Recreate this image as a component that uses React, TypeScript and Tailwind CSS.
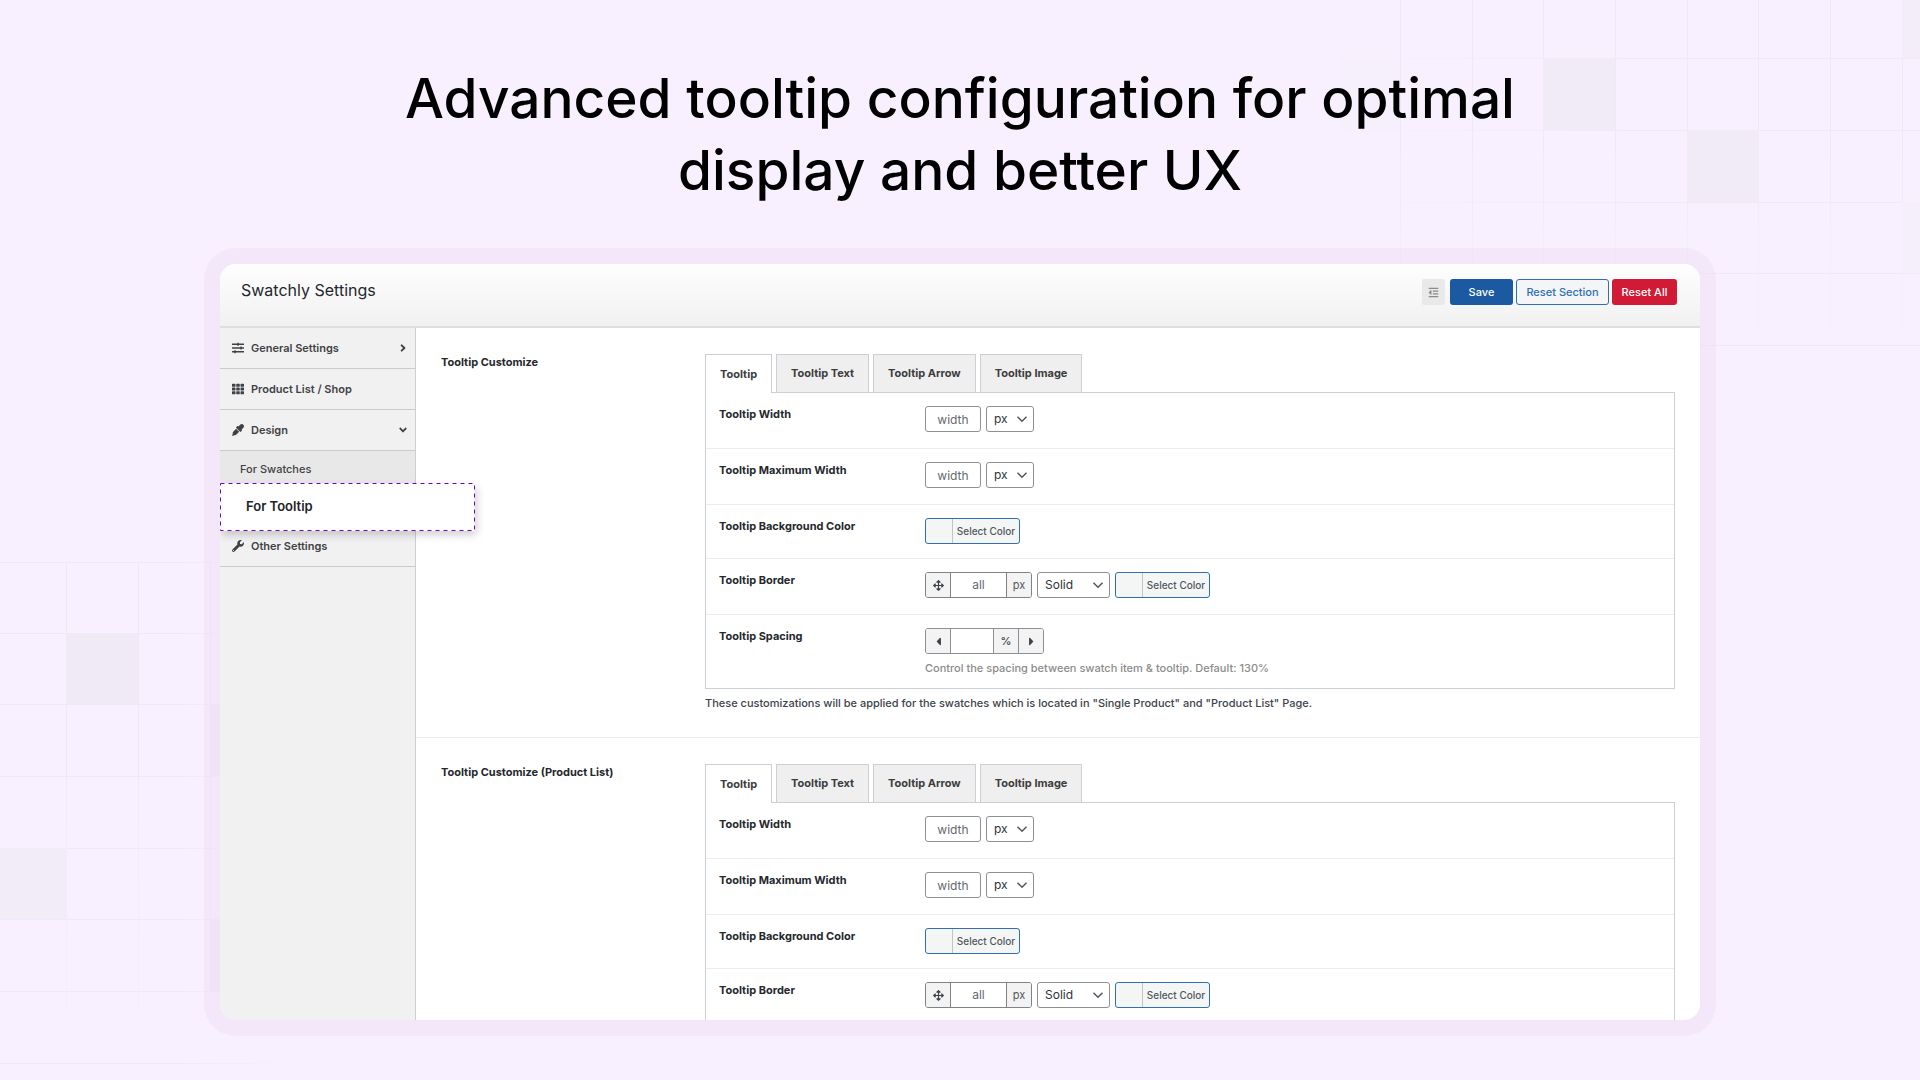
import type { ReactNode } from 'react';
import {
    FaAngleDown,
    FaAngleRight,
    FaArrowsAlt,
    FaCaretLeft,
    FaCaretRight,
    FaEyeDropper,
    FaOutdent,
    FaSlidersH,
    FaTh,
    FaWrench,
} from 'react-icons/fa';

const tabs = ['Tooltip', 'Tooltip Text', 'Tooltip Arrow', 'Tooltip Image'];

const rightColumns = [1400, 1472, 1543, 1615, 1687, 1758, 1830, 1902];
const rightRows = [58, 130, 202, 273, 345];
const leftColumns = [66, 138, 210];
const leftRows = [562, 633, 704, 776, 848, 919, 991, 1063];

function Backdrop() {
    return (
        <svg
            className="absolute inset-0 h-full w-full"
            viewBox="0 0 1920 1080"
            preserveAspectRatio="xMidYMid slice"
            aria-hidden="true"
        >
            <defs>
                <linearGradient id="fadeDown" x1="0" y1="0" x2="0" y2="1">
                    <stop offset="0.4" stopColor="#ece7f4" />
                    <stop offset="1" stopColor="#ece7f4" stopOpacity="0" />
                </linearGradient>
                <linearGradient id="fadeLeft" x1="1" y1="0" x2="0" y2="0">
                    <stop offset="0.5" stopColor="#ece7f4" />
                    <stop offset="1" stopColor="#ece7f4" stopOpacity="0" />
                </linearGradient>
                <linearGradient id="fadeRight" x1="0" y1="0" x2="1" y2="0">
                    <stop offset="0.6" stopColor="#ece7f4" />
                    <stop offset="1" stopColor="#ece7f4" stopOpacity="0" />
                </linearGradient>
            </defs>

            {/* Top right grid */}
            <g opacity="0.7">
                {rightColumns.map((x) => (
                    <rect key={x} x={x} y="0" width="1" height="367" fill="url(#fadeDown)" />
                ))}
                {rightRows.map((y) => (
                    <rect key={y} x="1339" y={y} width="581" height="1" fill="url(#fadeLeft)" />
                ))}
            </g>
            <rect x="1339" y="58" width="61" height="72" fill="#f6effc" />
            <rect x="1543" y="58" width="72" height="72" fill="#f1eaf7" />
            <rect x="1687" y="130" width="72" height="72" fill="#f1eaf7" />
            <rect x="1902" y="0" width="18" height="58" fill="#f3ecf9" />
            <rect x="1902" y="202" width="18" height="71" fill="#f5eefb" />

            {/* Bottom left grid */}
            <g opacity="0.7">
                {leftColumns.map((x) => (
                    <rect key={x} x={x} y="562" width="1" height="518" fill="url(#fadeDown)" />
                ))}
                {leftRows.map((y) => (
                    <rect key={y} x="0" y={y} width="300" height="1" fill="url(#fadeRight)" />
                ))}
            </g>
            <rect x="66" y="633" width="72" height="71" fill="#f0eaf7" />
            <rect x="0" y="848" width="67" height="71" fill="#f2ebf8" />
            <rect x="210" y="704" width="72" height="72" fill="#f0eaf7" />
            <rect x="210" y="919" width="72" height="72" fill="#f0eaf7" />
        </svg>
    );
}

function Chevron() {
    return (
        <svg
            className="pointer-events-none absolute top-1/2 right-1.5 h-3 w-3 -translate-y-1/2 text-[#50575e]"
            viewBox="0 0 12 12"
            fill="none"
            stroke="currentColor"
            strokeWidth="1.5"
            aria-hidden="true"
        >
            <path d="M1.5 3.8 6 8.3l4.5-4.5" />
        </svg>
    );
}

function Select({ label, value, className }: { label: string; value: string; className: string }) {
    return (
        <div className={`relative ${className}`}>
            <select
                aria-label={label}
                defaultValue={value}
                className="block h-[26px] w-full appearance-none rounded-[3px] border border-[#8c8f94] bg-white pl-[7px] text-xs text-[#2c3338]"
            >
                <option>{value}</option>
            </select>
            <Chevron />
        </div>
    );
}

function ColorButton() {
    return (
        <button
            type="button"
            className="flex h-[26px] w-[95px] items-stretch rounded-[3px] border border-[#2f6fb5] bg-[#f4f6f6] text-[10px] font-medium text-[#50575e]"
        >
            <span className="w-[27px] border-r border-[#c3c4c7]" />
            <span className="flex flex-1 items-center justify-center">Select Color</span>
        </button>
    );
}

function Row({ label, children, last }: { label: string; children: ReactNode; last?: boolean }) {
    return (
        <div className={`flex pt-[13px] pl-[13px] ${last ? '' : 'border-b border-[#ececec]'}`}>
            <h4 className="w-[206px] text-[11px] leading-4 font-bold text-[#23282d]">{label}</h4>
            <div className="flex-1">{children}</div>
        </div>
    );
}

function WidthFields({ name }: { name: string }) {
    return (
        <div className="flex gap-[5px] pb-4">
            <input
                type="text"
                aria-label={name}
                placeholder="width"
                className="h-[26px] w-14 rounded-[3px] border border-[#8c8f94] text-center text-xs placeholder:text-[#646970]"
            />
            <Select label={`${name} unit`} value="px" className="w-12" />
        </div>
    );
}

function SpacingField() {
    return (
        <>
            <div className="flex h-[26px] w-fit overflow-hidden rounded-[3px] border border-[#8c8f94] text-[#3c434a]">
                <button type="button" aria-label="Decrease" className="flex w-6 items-center justify-center bg-[#f3f3f3]">
                    <FaCaretLeft size={13} />
                </button>
                <input
                    type="text"
                    aria-label="Tooltip Spacing"
                    className="w-11 border-x border-[#8c8f94] text-center text-xs"
                />
                <span className="flex w-6 items-center justify-center bg-[#f3f3f3] text-[11px] font-medium">%</span>
                <button
                    type="button"
                    aria-label="Increase"
                    className="flex w-[25px] items-center justify-center border-l border-[#8c8f94] bg-[#f3f3f3]"
                >
                    <FaCaretRight size={13} />
                </button>
            </div>
            <p className="pt-1.5 pb-3 text-[11px] leading-4 font-medium text-[#8c8c8c]">
                Control the spacing between swatch item &amp; tooltip. Default: 130%
            </p>
        </>
    );
}

function Customize({ title, spacing, note }: { title: string; spacing?: boolean; note?: string }) {
    return (
        <section className="flex border-b border-[#ececec] px-[25px] pt-[26px] pb-[26px]">
            <h3 className="w-[264px] shrink-0 text-[11px] leading-4 font-bold text-[#23282d]">{title}</h3>
            <div className="min-w-0 flex-1">
                <div role="tablist" className="flex gap-1">
                    {tabs.map((tab, i) => (
                        <button
                            key={tab}
                            type="button"
                            role="tab"
                            aria-selected={i === 0}
                            className={`border border-b-0 border-[#ccd0d4] px-3.5 text-[11px] font-bold text-[#3c3c3c] ${
                                i === 0 ? 'relative -mb-px h-[39px] bg-white' : 'h-[38px] bg-[#efefef]'
                            }`}
                        >
                            {tab}
                        </button>
                    ))}
                </div>
                <div className="border border-[#ccd0d4]">
                    <Row label="Tooltip Width">
                        <WidthFields name="Tooltip Width" />
                    </Row>
                    <Row label="Tooltip Maximum Width">
                        <WidthFields name="Tooltip Maximum Width" />
                    </Row>
                    <Row label="Tooltip Background Color">
                        <div className="pb-3.5">
                            <ColorButton />
                        </div>
                    </Row>
                    <Row label="Tooltip Border" last={!spacing}>
                        <div className="flex gap-[5px] pb-4">
                            <div className="flex h-[26px] overflow-hidden rounded-[3px] border border-[#7e8388] text-[#50575e]">
                                <span className="flex w-6 items-center justify-center bg-[#f3f3f3] text-[#3c434a]">
                                    <FaArrowsAlt size={11} />
                                </span>
                                <input
                                    type="text"
                                    aria-label="Border width"
                                    placeholder="all"
                                    className="w-[57px] border-x border-[#7e8388] text-center text-xs placeholder:text-[#646970]"
                                />
                                <span className="flex w-6 items-center justify-center bg-[#f3f3f3] text-[11px]">px</span>
                            </div>
                            <Select label="Border style" value="Solid" className="w-[73px]" />
                            <ColorButton />
                        </div>
                    </Row>
                    {spacing && (
                        <Row label="Tooltip Spacing" last>
                            <SpacingField />
                        </Row>
                    )}
                </div>
                {note && <p className="mt-1.5 text-[11px] leading-4 font-medium text-[#3c434a]">{note}</p>}
            </div>
        </section>
    );
}

function NavItem({ icon, label, arrow }: { icon: ReactNode; label: string; arrow?: ReactNode }) {
    return (
        <a
            href="#"
            className="flex h-[41px] items-center border-b border-[#c9cccf] pr-1.5 pl-3 text-[11px] font-semibold text-[#3f4245]"
        >
            {icon}
            <span className="ml-[7px] flex-1">{label}</span>
            {arrow}
        </a>
    );
}

export default function App() {
    return (
        <main className="relative flex h-screen flex-col overflow-hidden bg-[#f8f0fe] px-[204px] pt-[62px] pb-11 font-['Inter',sans-serif]">
            <Backdrop />

            <h1 className="relative mb-[42px] text-center text-[55px] leading-[72px] font-medium text-black">
                Advanced tooltip configuration for optimal
                <br />
                display and better UX
            </h1>

            <div className="relative flex min-h-0 flex-1 rounded-[32px] bg-[#edd8f4]/35 p-4">
                <div className="flex min-w-0 flex-1 flex-col overflow-hidden rounded-2xl bg-white">
                    <header className="flex h-16 shrink-0 justify-between border-b-2 border-[#dfdfdf] bg-gradient-to-b from-[#fefefe] to-[#f1f1f1] pr-[23px] pl-[21px]">
                        <h2 className="pt-3.5 text-base leading-6 text-[#23282d]">Swatchly Settings</h2>
                        <div className="flex gap-[3px] pt-[15px] text-[11px] font-medium">
                            <button
                                type="button"
                                aria-label="Toggle all options"
                                className="mr-0.5 flex h-[26px] w-[23px] items-center justify-center rounded-xs bg-[#e9e9e9] text-[#8a8a8a]"
                            >
                                <FaOutdent size={11} />
                            </button>
                            <button type="button" className="h-[26px] w-[63px] rounded-[3px] bg-[#1b5aa0] text-white">
                                Save
                            </button>
                            <button
                                type="button"
                                className="h-[26px] w-[93px] rounded-[3px] border border-[#2f6fb5] bg-[#f3f5f6] text-[#2f6fb5]"
                            >
                                Reset Section
                            </button>
                            <button type="button" className="h-[26px] w-[65px] rounded-[3px] bg-[#d11a35] text-white">
                                Reset All
                            </button>
                        </div>
                    </header>

                    <div className="flex min-h-0 flex-1">
                        <nav className="w-[196px] shrink-0 border-r border-[#ccd0d4] bg-[#f1f1f1]">
                            <NavItem icon={<FaSlidersH size={12} />} label="General Settings" arrow={<FaAngleRight size={12} />} />
                            <NavItem icon={<FaTh size={12} />} label="Product List / Shop" />
                            <NavItem icon={<FaEyeDropper size={12} />} label="Design" arrow={<FaAngleDown size={12} />} />
                            <div className="bg-[#e8e8e8] text-[11px] font-medium text-[#3f4245]">
                                <a href="#" className="flex h-[37px] items-center pl-5">
                                    For Swatches
                                </a>
                                {/* Active item pops out over the content column */}
                                <div className="relative h-[38px]">
                                    <a
                                        href="#"
                                        className="absolute -top-[5px] left-0 z-10 flex h-12 w-[255px] items-center bg-white pl-[26px] text-[13px] font-semibold text-[#1d2327] shadow-[2px_4px_8px_rgba(0,0,0,0.18)]"
                                    >
                                        <svg className="absolute inset-0 h-full w-full" aria-hidden="true">
                                            <rect
                                                x="0.5"
                                                y="0.5"
                                                width="254"
                                                height="47"
                                                fill="none"
                                                stroke="#7a00b8"
                                                strokeDasharray="4 4"
                                            />
                                        </svg>
                                        For Tooltip
                                    </a>
                                </div>
                            </div>
                            <NavItem icon={<FaWrench size={12} />} label="Other Settings" />
                        </nav>

                        <div className="min-w-0 flex-1 overflow-hidden">
                            <Customize
                                title="Tooltip Customize"
                                spacing
                                note={'These customizations will be applied for the swatches which is located in "Single Product" and "Product List" Page.'}
                            />
                            <Customize title="Tooltip Customize (Product List)" />
                        </div>
                    </div>
                </div>
            </div>
        </main>
    );
}
